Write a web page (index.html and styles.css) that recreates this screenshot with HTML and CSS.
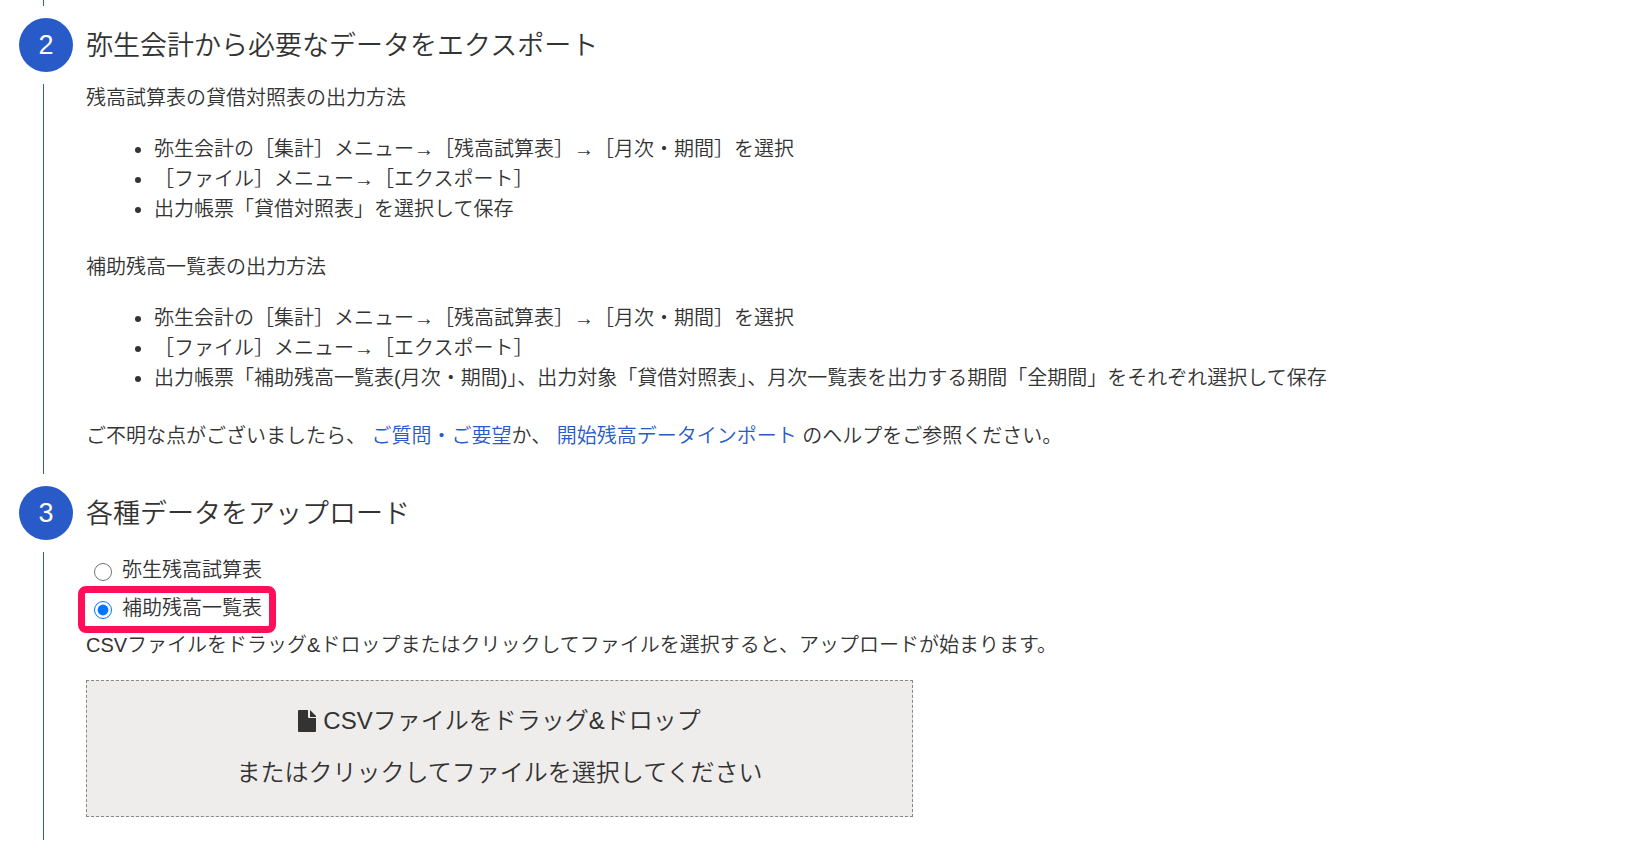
FILE: index.html
```html
<!DOCTYPE html>
<html lang="ja">
<head>
  <meta charset="UTF-8">
  <meta name="viewport" content="width=device-width, initial-scale=1">
  <title>開始残高データインポート</title>
  <link rel="stylesheet" href="styles.css">
</head>
<body>
  <main class="steps">
    <div class="step-lead"></div>

    <section class="step">
      <div class="step-marker">
        <span class="step-number">2</span>
      </div>
      <div class="step-body">
        <h2>弥生会計から必要なデータをエクスポート</h2>
        <p>残高試算表の貸借対照表の出力方法</p>
        <ul>
          <li>弥生会計の［集計］メニュー→［残高試算表］→［月次・期間］を選択</li>
          <li>［ファイル］メニュー→［エクスポート］</li>
          <li>出力帳票「貸借対照表」を選択して保存</li>
        </ul>
        <p>補助残高一覧表の出力方法</p>
        <ul>
          <li>弥生会計の［集計］メニュー→［残高試算表］→［月次・期間］を選択</li>
          <li>［ファイル］メニュー→［エクスポート］</li>
          <li>出力帳票「補助残高一覧表(月次・期間)」、出力対象「貸借対照表」、月次一覧表を出力する期間「全期間」をそれぞれ選択して保存</li>
        </ul>
        <p>ご不明な点がございましたら、 <a href="#">ご質問・ご要望</a>か、 <a href="#">開始残高データインポート</a> のヘルプをご参照ください。</p>
      </div>
    </section>

    <section class="step">
      <div class="step-marker">
        <span class="step-number">3</span>
      </div>
      <div class="step-body">
        <h2>各種データをアップロード</h2>
        <div class="choices">
          <label class="choice" for="typeTrial">
            <input type="radio" id="typeTrial" name="type">
            <span>弥生残高試算表</span>
          </label>
          <label class="choice highlight" for="typeSub">
            <input type="radio" id="typeSub" name="type" checked>
            <span>補助残高一覧表</span>
          </label>
        </div>
        <p>CSVファイルをドラッグ&amp;ドロップまたはクリックしてファイルを選択すると、アップロードが始まります。</p>
        <label class="dropzone" for="csvFile">
          <span class="dropzone-line">
            <svg class="file-icon" viewBox="0 0 18 22" aria-hidden="true">
              <path d="M1 0h9v7a1 1 0 0 0 1 1h7v13a1 1 0 0 1-1 1H1a1 1 0 0 1-1-1V1a1 1 0 0 1 1-1z"/>
              <path d="M12 0l6 6v1h-6z"/>
            </svg>
            CSVファイルをドラッグ&amp;ドロップ
          </span>
          <span class="dropzone-line">またはクリックしてファイルを選択してください</span>
          <input type="file" id="csvFile" class="file-input" accept=".csv">
        </label>
      </div>
    </section>
  </main>
</body>
</html>
```

FILE: styles.css
```css
* { box-sizing: border-box; }
body {
  margin: 0;
  background-color: #fff;
  color: #333;
  font-family: "Liberation Sans", "Noto Sans CJK JP", sans-serif;
  font-size: 20px;
  font-weight: 350;
  line-height: 30px;
}
a {
  color: #285ac8;
  text-decoration: none;
}
.steps {
  padding: 0 19px 8px;
}
/* tail of the line coming from the step above */
.step-lead {
  width: 1px;
  height: 6px;
  margin: 0 0 12px 24px;
  background-color: #285ac8;
}
.step {
  display: flex;
  gap: 13px;
}
.step + .step {
  margin-top: 12px;
}
.step-marker {
  display: flex;
  flex-direction: column;
  gap: 12px;
}
.step-marker::after {
  content: "";
  flex: 1;
  width: 1px;
  margin-left: 24px;
  background-color: #285ac8;
}
.step-number {
  width: 54px;
  height: 54px;
  border-radius: 50%;
  background-color: #285ac8;
  color: #fff;
  font-size: 27px;
  line-height: 54px;
  text-align: center;
}
.step-body {
  flex: 1;
  min-width: 0;
  padding: 1px 0 23px;
}
.step-body h2 {
  margin: 0 0 10px;
  font-size: 27px;
  font-weight: 350;
  line-height: 54px;
}
.step-body p {
  margin: 0;
}
.step-body ul {
  margin: 21px 0 28px;
  padding-left: 68px;
}
.choices {
  display: flex;
  flex-direction: column;
  align-items: flex-start;
  padding: 0 8px 3px;
}
.choice {
  display: flex;
  align-items: center;
  gap: 10px;
  height: 38px;
  cursor: pointer;
}
.choice input {
  width: 18px;
  height: 18px;
  margin: 4px 0 0;
  accent-color: #0075ff;
}
.highlight {
  position: relative;
}
.highlight::after {
  content: "";
  position: absolute;
  inset: -3px -14px -6px -16px;
  border: 7px solid #ff0f5a;
  border-radius: 8px;
  pointer-events: none;
}
.dropzone {
  position: relative;
  display: flex;
  flex-direction: column;
  align-items: center;
  max-width: 827px;
  margin-top: 20px;
  padding: 14px 16px 17px;
  border: 1px dashed #888;
  background-color: #efedec;
  font-size: 24px;
  line-height: 52px;
  cursor: pointer;
}
.dropzone-line {
  display: flex;
  align-items: center;
  gap: 7px;
}
.file-icon {
  width: 18px;
  height: 22px;
  fill: #333;
}
.file-input {
  position: absolute;
  inset: 0;
  width: 100%;
  opacity: 0;
  cursor: pointer;
}
```
